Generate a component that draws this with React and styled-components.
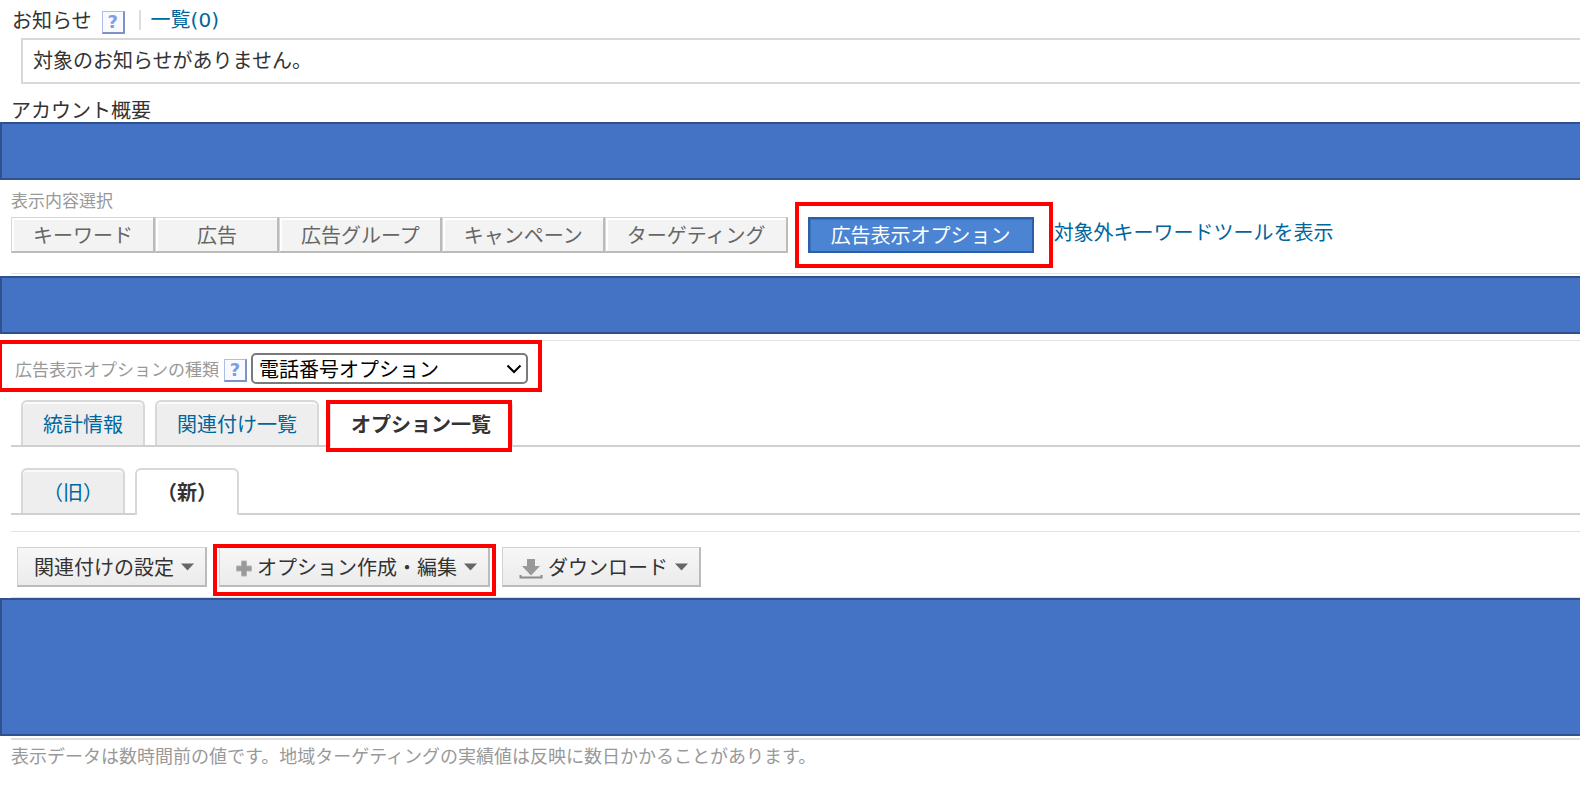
import styled, { createGlobalStyle, css } from "styled-components";

const CONTENT_TYPES = ["キーワード", "広告", "広告グループ", "キャンペーン", "ターゲティング"];

const HelpButton = () => (
  <Help type="button" aria-label="ヘルプ">?</Help>
);

const Caret = () => (
  <CaretSvg width="13" height="8" viewBox="0 0 13 8" aria-hidden="true">
    <path d="M0 0.5h13L6.5 7.5z" fill="#666" />
  </CaretSvg>
);

const PlusIcon = () => (
  <IconSvg width="16" height="17" viewBox="0 0 16 17" aria-hidden="true">
    <path d="M5.500 1h5v5h5v5h-5v5h-5v-5h-5V6h5z" fill="#999" stroke="#b4b4b4" />
  </IconSvg>
);

const DownloadIcon = () => (
  <IconSvg width="24" height="20" viewBox="0 0 24 20" aria-hidden="true">
    <path d="M8 0h8v7h5l-9 9.500L3 7h5z" fill="#999" />
    <path d="M1.500 16v2.500h21V16" fill="none" stroke="#8c8c8c" strokeWidth="2" />
  </IconSvg>
);

const App = () => {
  return (
    <>
      <GlobalStyle />
      <Page>
        <NoticeHeader>
          <Title>お知らせ</Title>
          <HelpButton />
          <Divider />
          <NoticeLink href="#notices">一覧(0)</NoticeLink>
        </NoticeHeader>
        <NoticeBox>対象のお知らせがありません。</NoticeBox>

        <AccountTitle>アカウント概要</AccountTitle>
        <Band />

        <ContentSelect>
          <SmallLabel id="content-label">表示内容選択</SmallLabel>
          <ContentRow>
            <ContentGroup role="group" aria-labelledby="content-label">
              {CONTENT_TYPES.map((name) => (
                <ContentButton type="button" key={name}>{name}</ContentButton>
              ))}
            </ContentGroup>
            <Highlight $inset="-15px -19px -15px -13px">
              <ContentButton type="button" $active>広告表示オプション</ContentButton>
            </Highlight>
            <ToolLink href="#negative">対象外キーワードツールを表示</ToolLink>
          </ContentRow>
        </ContentSelect>
        <Band />

        <OptionForm>
          <Highlight $inset="-13px -14px -8px -17px">
            <SmallLabel as="label" htmlFor="option-type">広告表示オプションの種類</SmallLabel>
            <HelpButton />
            <SelectWrap>
              <Select id="option-type" defaultValue="tel">
                <option value="tel">電話番号オプション</option>
              </Select>
              <svg width="16" height="10" viewBox="0 0 16 10" aria-hidden="true">
                <path d="M1.500 1.500L8 8l6.500-6.500" fill="none" stroke="#000" strokeWidth="2" />
              </svg>
            </SelectWrap>
          </Highlight>
        </OptionForm>

        <Tabs>
          <Tab href="#stats">統計情報</Tab>
          <Tab href="#links">関連付け一覧</Tab>
          <Highlight $inset="0 1px -7px -3px">
            <Tab href="#options" $active>オプション一覧</Tab>
          </Highlight>
        </Tabs>
        <SubTabs>
          <Tab href="#old">（旧）</Tab>
          <Tab href="#new" $active>（新）</Tab>
        </SubTabs>

        <Toolbar>
          <ToolButton type="button">
            <span>関連付けの設定</span>
            <Caret />
          </ToolButton>
          <Highlight $inset="-3px -6px -9px">
            <ToolButton type="button">
              <PlusIcon />
              <span>オプション作成・編集</span>
              <Caret />
            </ToolButton>
          </Highlight>
          <ToolButton type="button">
            <DownloadIcon />
            <span>ダウンロード</span>
            <Caret />
          </ToolButton>
        </Toolbar>
        <Band $tall />

        <Footer>
          表示データは数時間前の値です。地域ターゲティングの実績値は反映に数日かかることがあります。
        </Footer>
      </Page>
    </>
  );
};

const GlobalStyle = createGlobalStyle`
  * {
    box-sizing: border-box;
  }

  body {
    margin: 0;
    background: #fff;
    color: #333;
    font-family: "Noto Sans CJK JP", sans-serif;
    font-size: 20px;
    line-height: 28px;
  }

  button, select {
    font: inherit;
    cursor: pointer;
  }

  a {
    color: #00669c;
    text-decoration: none;
  }
`;

const Page = styled.main`
  display: flex;
  flex-direction: column;
  overflow-x: hidden;
  white-space: nowrap;
`;

const Title = styled.h2`
  margin: 0;
  font-size: 20px;
  font-weight: 400;
`;

const NoticeHeader = styled.div`
  display: flex;
  align-items: center;
  height: 38px;
  padding: 1px 0 0 12px;
  gap: 10px;
`;

const Help = styled.button`
  display: flex;
  align-items: center;
  justify-content: center;
  width: 23px;
  height: 23px;
  margin-top: 6px;
  padding: 0;
  border: 1px solid #a9bfea;
  border-right: 2px solid #7c93c4;
  border-bottom: 2px solid #7c93c4;
  background: #f8faff;
  color: #7b9fe6;
  font-family: "DejaVu Sans", sans-serif;
  font-size: 18px;
  font-weight: 700;
  line-height: 20px;
`;

const Divider = styled.span`
  width: 2px;
  height: 20px;
  margin-left: 4px;
  background: #ddd;
`;

const NoticeLink = styled.a`
  font-family: "DejaVu Sans", "Noto Sans CJK JP", sans-serif;
`;

const NoticeBox = styled.div`
  margin-left: 21px;
  padding: 6px 10px 8px;
  border: 2px solid #d8d8d8;
  border-right: 0;
`;

const AccountTitle = styled(Title)`
  height: 38px;
  padding: 12px 0 0 11px;
`;

const Band = styled.div`
  height: ${({ $tall }) => ($tall ? "138px" : "58px")};
  border: 2px solid #2f528f;
  border-right: 0;
  background: #4472c4;
`;

/* red frame drawn over the part it marks */
const Highlight = styled.div`
  position: relative;
  display: flex;
  align-items: center;

  &::after {
    content: "";
    position: absolute;
    inset: ${({ $inset }) => $inset};
    border: 4px solid #f00;
    pointer-events: none;
  }
`;

const SmallLabel = styled.div`
  color: #999;
  font-size: 17px;
  line-height: 22px;
`;

const ContentSelect = styled.section`
  margin: 0 0 2px 11px;
  padding: 9px 0 20px;
  border-bottom: 1px solid #e2e2e2;
`;

const ContentRow = styled.div`
  display: flex;
  align-items: flex-start;
  gap: 20px;
  margin-top: 6px;
`;

const ContentGroup = styled.div`
  display: flex;
`;

const ContentButton = styled.button`
  min-width: 124px;
  height: 36px;
  padding: 0 20px 0 21px;
  border: 1px solid #d6d6d6;
  border-right: 2px solid #bbb;
  border-bottom: 2px solid #bbb;
  background: #f3f3f3;
  box-shadow: inset 2px 2px 0 #fff;
  color: #666;

  ${({ $active }) =>
    $active &&
    css`
      padding: 0 21px;
      border: 2px solid #2c5fa8;
      background: #4a84d3;
      box-shadow: inset 1px 1px 0 #3d72bd;
      color: #fff;
    `}
`;

const ToolLink = styled.a`
  line-height: 30px;
`;

const OptionForm = styled.div`
  display: flex;
  margin: 6px 0 0 11px;
  padding: 12px 0 16px 4px;
  border-top: 1px solid #e2e2e2;

  ${Help} {
    margin: 4px 4px 0 5px;
  }
`;

const SelectWrap = styled.div`
  display: grid;
  align-items: center;

  > * {
    grid-area: 1 / 1;
  }

  svg {
    justify-self: end;
    margin-right: 6px;
    pointer-events: none;
  }
`;

const Select = styled.select`
  appearance: none;
  width: 277px;
  height: 31px;
  padding: 0 6px;
  border: 2px solid #7a7a7a;
  border-radius: 5px;
  background: #fff;
  color: #000;
  line-height: 27px;
`;

const Tabs = styled.nav`
  display: flex;
  gap: 10px;
  margin-left: 11px;
  padding-left: 10px;
  border-bottom: 2px solid #d0d0d0;
`;

const SubTabs = styled(Tabs)`
  margin-top: 21px;
`;

const Tab = styled.a`
  height: 45px;
  padding: 8px 20px 0;
  border: 2px solid #d8d8d8;
  border-bottom: 0;
  border-radius: 6px 6px 0 0;
  background: #eee;
  box-shadow: inset 0 2px 0 #fafafa;

  ${({ $active }) =>
    $active &&
    css`
      height: 47px;
      margin-bottom: -2px;
      background: #fff;
      box-shadow: none;
      color: #333;
      font-weight: 700;
    `}
`;

const Toolbar = styled.div`
  display: flex;
  gap: 12px;
  margin: 16px 0 0 11px;
  padding: 15px 0 10px 6px;
  border-top: 1px solid #e2e2e2;
  border-bottom: 1px solid #ddd;
`;

const ToolButton = styled.button`
  display: flex;
  align-items: center;
  gap: 5px;
  height: 40px;
  padding: 0 11px 0 16px;
  border: 1px solid #d2d2d2;
  border-right: 2px solid #bbb;
  border-bottom: 2px solid #bbb;
  background: linear-gradient(#f7f7f7, #ebebeb);
  color: #333;
`;

const IconSvg = styled.svg`
  margin-top: 4px;
`;

const CaretSvg = styled.svg`
  margin-left: 2px;
`;

const Footer = styled.footer`
  margin: 2px 0 0 11px;
  border-top: 2px solid #ddd;
  color: #999;
  font-size: 18px;
  line-height: 30px;
`;

export default App;
